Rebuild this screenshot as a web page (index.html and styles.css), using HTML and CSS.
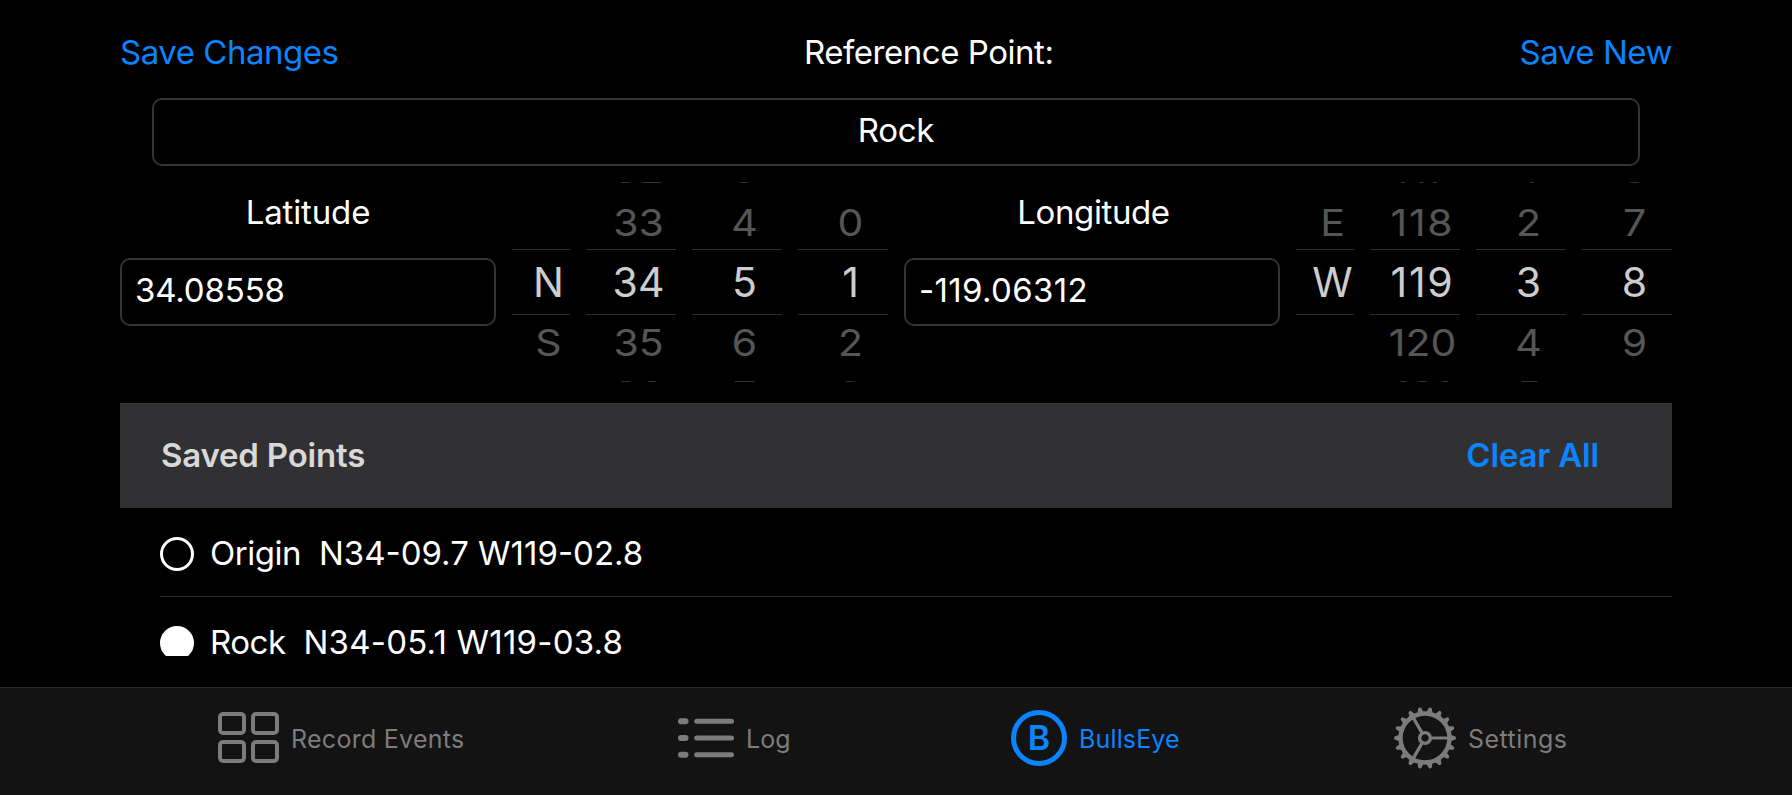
FILE: index.html
```html
<!DOCTYPE html>
<html lang="en">
<head>
<meta charset="utf-8">
<title>BullsEye</title>
<link rel="stylesheet" href="styles.css">
</head>
<body>
<main class="screen">
  <header class="toolbar">
    <a class="link save-changes">Save Changes</a>
    <h1 class="title">Reference Point:</h1>
    <a class="link save-new">Save New</a>
  </header>

  <div class="field name-field">Rock</div>

  <section class="coords">
    <div class="coord">
      <div class="coord-label label-lat">Latitude</div>
      <div class="field value-field value-lat">34.08558</div>
    </div>
    <div class="picker">
      <div class="wheel wheel-hemi"><b class="far"></b><b class="near"></b><b class="sel"><i>N</i></b><b class="near"><i>S</i></b><b class="far"></b></div>
      <div class="wheel"><b class="far above"><i>32</i></b><b class="near"><i>33</i></b><b class="sel"><i>34</i></b><b class="near"><i>35</i></b><b class="far below"><i>36</i></b></div>
      <div class="wheel"><b class="far above"><i>3</i></b><b class="near"><i>4</i></b><b class="sel"><i>5</i></b><b class="near"><i>6</i></b><b class="far below"><i>7</i></b></div>
      <div class="wheel"><b class="far"></b><b class="near"><i>0</i></b><b class="sel"><i>1</i></b><b class="near"><i>2</i></b><b class="far below"><i>3</i></b></div>
    </div>
    <div class="coord">
      <div class="coord-label label-lon">Longitude</div>
      <div class="field value-field value-lon">-119.06312</div>
    </div>
    <div class="picker">
      <div class="wheel wheel-hemi"><b class="far"></b><b class="near"><i>E</i></b><b class="sel"><i>W</i></b><b class="near"></b><b class="far"></b></div>
      <div class="wheel"><b class="far above wide"><i>117</i></b><b class="near wide"><i>118</i></b><b class="sel wide"><i>119</i></b><b class="near"><i>120</i></b><b class="far below"><i>121</i></b></div>
      <div class="wheel"><b class="far above"><i>1</i></b><b class="near"><i>2</i></b><b class="sel"><i>3</i></b><b class="near"><i>4</i></b><b class="far below"><i>5</i></b></div>
      <div class="wheel"><b class="far above"><i>6</i></b><b class="near"><i>7</i></b><b class="sel"><i>8</i></b><b class="near"><i>9</i></b><b class="far"></b></div>
    </div>
  </section>

  <section class="saved">
    <div class="saved-head">
      <h2 class="saved-title">Saved Points</h2>
      <a class="clear-all">Clear All</a>
    </div>
    <ul class="points">
      <li class="point"><span class="radio"></span><span class="point-name">Origin</span><span class="point-pos">N34-09.7 W119-02.8</span></li>
      <li class="point"><span class="radio radio-on"></span><span class="point-name">Rock</span><span class="point-pos pos-loose">N34-05.1 W119-03.8</span></li>
    </ul>
  </section>
</main>

<nav class="tabs">
  <a class="tab">
    <svg width="61" height="51" viewBox="0 0 61 51" fill="none" stroke="currentColor" stroke-width="4">
      <rect x="2" y="2" width="24" height="19" rx="3"/><rect x="35" y="2" width="24" height="19" rx="3"/>
      <rect x="2" y="30" width="24" height="19" rx="3"/><rect x="35" y="30" width="24" height="19" rx="3"/>
    </svg>
    <span class="tab-text tab-record">Record Events</span>
  </a>
  <a class="tab">
    <svg width="56" height="40" viewBox="0 0 56 40" fill="currentColor">
      <rect x="0" y="0.3" width="10.5" height="6" rx="3"/><rect x="16.2" y="0.8" width="39.8" height="5" rx="2.5"/>
      <rect x="0" y="17" width="10.5" height="6" rx="3"/><rect x="16.2" y="17.5" width="39.8" height="5" rx="2.5"/>
      <rect x="0" y="33.7" width="10.5" height="6" rx="3"/><rect x="16.2" y="34.2" width="39.8" height="5" rx="2.5"/>
    </svg>
    <span class="tab-text">Log</span>
  </a>
  <a class="tab tab-active">
    <span class="badge">B</span>
    <span class="tab-text tab-bulls">BullsEye</span>
  </a>
  <a class="tab">
    <svg width="62" height="62" viewBox="-31 -31 62 62" fill="none" stroke="currentColor">
      <defs><path id="tooth" d="M24.5 -3.4L30 -1.7Q31 -1.3 31 0Q31 1.3 30 1.7L24.5 3.4Z" fill="currentColor" stroke="none"/></defs>
      <circle r="24.5" stroke-width="4.4"/>
      <circle r="5.4" stroke-width="3.4"/>
      <path d="M6.5 0H23M-3.25 -5.63L-11.5 -19.9M-3.25 5.63L-11.5 19.9" stroke-width="3.2"/>
      <g>
        <use href="#tooth"/><use href="#tooth" transform="rotate(20)"/><use href="#tooth" transform="rotate(40)"/>
        <use href="#tooth" transform="rotate(60)"/><use href="#tooth" transform="rotate(80)"/><use href="#tooth" transform="rotate(100)"/>
        <use href="#tooth" transform="rotate(120)"/><use href="#tooth" transform="rotate(140)"/><use href="#tooth" transform="rotate(160)"/>
        <use href="#tooth" transform="rotate(180)"/><use href="#tooth" transform="rotate(200)"/><use href="#tooth" transform="rotate(220)"/>
        <use href="#tooth" transform="rotate(240)"/><use href="#tooth" transform="rotate(260)"/><use href="#tooth" transform="rotate(280)"/>
        <use href="#tooth" transform="rotate(300)"/><use href="#tooth" transform="rotate(320)"/><use href="#tooth" transform="rotate(340)"/>
      </g>
    </svg>
    <span class="tab-text tab-settings">Settings</span>
  </a>
</nav>
</body>
</html>
```
FILE: styles.css
```css
* { box-sizing: border-box; margin: 0; padding: 0; }
body {
  width: 1792px; height: 795px; overflow: hidden;
  background: #000; color: #fff;
  font: 400 33px/40px Inter, "Liberation Sans", sans-serif;
  display: flex; flex-direction: column;
}
.screen { height: 687px; padding: 0 120px; }

.toolbar { height: 98px; padding-top: 32px; display: grid; grid-template-columns: 684px 1fr auto; letter-spacing: -0.47px; }
.title { font: inherit; }
.link, .clear-all { color: #0a84ff; }

.field { border: 2px solid #333; border-radius: 10px; height: 68px; }
.name-field { margin: 0 32px; padding-top: 10px; text-align: center; letter-spacing: -0.3px; }

.coords { display: flex; gap: 16px; height: 200px; margin-top: 16px; }
.coord { width: 376px; }
.coord-label { height: 76px; padding-top: 10px; text-align: center; }
.label-lat { letter-spacing: -0.15px; }
.label-lon { letter-spacing: -0.4px; padding-left: 3px; }
.value-field { padding: 10px 13px; }
.value-lat { letter-spacing: -0.15px; }
.value-lon { letter-spacing: 0.35px; }

.picker { display: flex; gap: 16px; height: 200px; overflow: hidden; font-size: 41px; }
.wheel { width: 90px; display: flex; flex-direction: column; }
.wheel-hemi { width: 58px; }
.wheel b { display: flex; justify-content: center; align-items: center; padding-left: 15px; font-weight: 400; }
.wheel i { font-style: normal; }
.wheel .wide { letter-spacing: 1.7px; }
.sel { height: 66px; border: solid #2e2e2e; border-width: 1px 0; color: #cdcdcd; }
.near { height: 54px; color: #565656; }
.near i { transform: scaleY(.91); }
.far { height: 13px; color: #333; }
.above i { transform: translateY(-15.3px) scaleY(.6); }
.below i { transform: translateY(13.6px) scaleY(.6); }

.saved { margin-top: 21px; }
.saved-head {
  height: 105px; padding: 0 73px 2px 41px; background: #313133; font-weight: 600;
  display: flex; justify-content: space-between; align-items: center; letter-spacing: -0.2px;
}
.saved-title { font: inherit; color: #d8d8d9; }
.points { height: 148px; overflow: hidden; padding-left: 40px; list-style: none; }
.point { height: 89px; padding-top: 3px; border-bottom: 1px solid #2e2e30; display: flex; align-items: center; }
.radio { width: 34px; height: 34px; border: 3px solid #fff; border-radius: 50%; margin-right: 16px; }
.radio-on { background: #fff; }
.point-name { margin-right: 18px; letter-spacing: -0.5px; }
.point-name, .point-pos { padding-bottom: 2px; }
.pos-loose { letter-spacing: 0.22px; }

.tabs {
  height: 108px; padding-left: 218px; background: #121312; border-top: 1px solid #2a2a2a;
  display: grid; grid-template-columns: 460px 333px 383px 1fr; color: #7c7c7c; font-size: 25px;
}
.tab { height: 99px; display: flex; align-items: center; gap: 12px; }
.tab-active { color: #0a84ff; }
.tab-text { padding-top: 3px; }
.tab-record { letter-spacing: 0.27px; }
.tab-bulls { letter-spacing: 0.15px; }
.tab-settings { letter-spacing: 0.45px; }
.badge {
  width: 56px; height: 56px; margin-top: 1px; border: 5px solid currentColor; border-radius: 50%;
  display: flex; justify-content: center; align-items: center; font-size: 34px; font-weight: 600;
}
```
